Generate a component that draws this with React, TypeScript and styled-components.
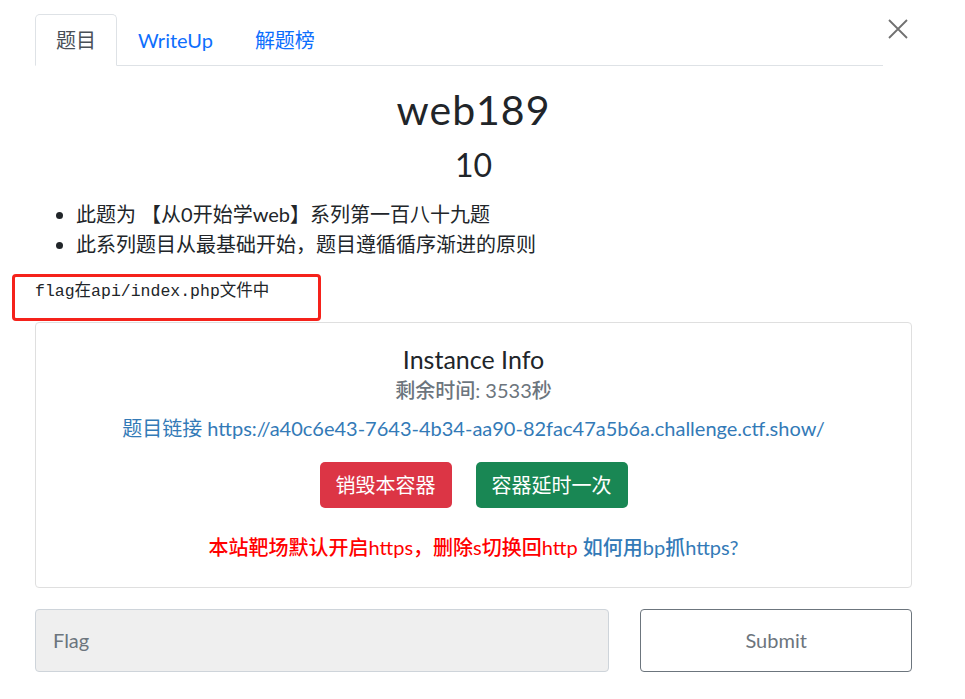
import React from "react";
import styled, { createGlobalStyle } from "styled-components";

const GlobalStyle = createGlobalStyle`
  body {
    margin: 0;
    background: #fff;
    color: #212529;
    font-family: Lato, "Noto Sans CJK SC", sans-serif;
  }
`;

const Page = styled.div`
  padding: 14px 53px 26px 35px;
`;

const Header = styled.div`
  display: flex;
  align-items: flex-start;
`;

const Tabs = styled.ul`
  flex: 1;
  display: flex;
  margin: 0;
  padding: 0;
  list-style: none;
  border-bottom: 1px solid #dee2e6;
`;

const Tab = styled.li<{ $active?: boolean }>`
  margin-bottom: -1px;
  padding: 10px 20px;
  font-size: 20px;
  line-height: 30px;
  border: 1px solid transparent;
  border-radius: 5px 5px 0 0;
  cursor: pointer;
  color: ${(p) => (p.$active ? "#495057" : "#0d6efd")};
  ${(p) =>
    p.$active &&
    `
    background: #fff;
    border-color: #dee2e6 #dee2e6 #fff;
  `}
`;

const CloseButton = styled.button`
  width: 20px;
  height: 20px;
  margin: 5px 4px 0 5px;
  padding: 0;
  border: none;
  background: none;
  cursor: pointer;
  display: flex;
`;

const Title = styled.h1`
  margin: 19px 0 0;
  font-size: 41px;
  font-weight: 400;
  line-height: 1.2;
  letter-spacing: 1px;
  text-align: center;
`;

const Score = styled.h2`
  margin: 12px 0 0;
  font-size: 32px;
  font-weight: 400;
  line-height: 1.2;
  text-align: center;
`;

const Points = styled.ul`
  margin: 14px 0 0;
  padding-left: 41px;
  font-size: 20px;
  line-height: 30px;
`;

const HintWrap = styled.div`
  position: relative;
  margin-top: 21px;
`;

const Hint = styled.pre`
  margin: 0;
  font-family: "Liberation Mono", "Noto Sans CJK SC", monospace;
  font-size: 16.5px;
  line-height: 24px;
  color: #212529;
`;

const Highlight = styled.div`
  position: absolute;
  left: -23px;
  top: -6px;
  width: 303px;
  height: 41px;
  border: 3px solid #f5221b;
  border-radius: 4px;
  pointer-events: none;
`;

const Card = styled.div`
  margin-top: 18px;
  padding: 22px 20px 26px;
  border: 1px solid #dfdfdf;
  border-radius: 4px;
  text-align: center;
`;

const CardTitle = styled.div`
  font-size: 25px;
  line-height: 29px;
`;

const Line = styled.div<{ $gap: number; $color?: string }>`
  margin-top: ${(p) => p.$gap}px;
  font-size: 20px;
  line-height: 28px;
  color: ${(p) => p.$color || "#212529"};
`;

const Strong = styled.span`
  font-weight: 500;
`;

const Link = styled.a`
  color: #337ab7;
  text-decoration: none;
`;

const Actions = styled.div`
  margin-top: 20px;
  display: flex;
  justify-content: center;
  gap: 24px;
`;

const ActionButton = styled.button<{ $tone: "danger" | "success" }>`
  padding: 8px 16px;
  border: none;
  border-radius: 5px;
  font-family: inherit;
  font-size: 20px;
  line-height: 30px;
  color: #fff;
  cursor: pointer;
  background: ${(p) => (p.$tone === "danger" ? "#dc3545" : "#198754")};
`;

const FlagForm = styled.form`
  margin-top: 21px;
  display: grid;
  grid-template-columns: calc((100% + 31px) * 2 / 3 - 31px) 1fr;
  column-gap: 31px;
`;

const FlagInput = styled.input`
  box-sizing: border-box;
  height: 63px;
  padding: 0 17px;
  border: 1px solid #ced4da;
  border-radius: 4px;
  background: #efefef;
  font-family: inherit;
  font-size: 20px;
  color: #495057;
  &::placeholder {
    color: #6c757d;
  }
`;

const SubmitButton = styled.button`
  height: 63px;
  border: 1px solid #6c757d;
  border-radius: 4px;
  background: #fff;
  font-family: inherit;
  font-size: 20px;
  color: #6c757d;
  cursor: pointer;
`;

export default function App() {
  return (
    <React.Fragment>
      <GlobalStyle />
      <Page>
        <Header>
          <Tabs>
            <Tab $active>题目</Tab>
            <Tab>WriteUp</Tab>
            <Tab>解题榜</Tab>
          </Tabs>
          <CloseButton aria-label="Close">
            <svg width="20" height="20" viewBox="0 0 20 20">
              <path d="M1 1L19 19M19 1L1 19" stroke="#707070" strokeWidth="1.8" />
            </svg>
          </CloseButton>
        </Header>

        <Title>web189</Title>
        <Score>10</Score>
        <Points>
          <li>此题为 【从0开始学web】系列第一百八十九题</li>
          <li>此系列题目从最基础开始，题目遵循循序渐进的原则</li>
        </Points>

        <HintWrap>
          <Hint>flag在api/index.php文件中</Hint>
          <Highlight />
        </HintWrap>

        <Card>
          <CardTitle>Instance Info</CardTitle>
          <Line $gap={2} $color="#6c757d">
            <Strong>剩余时间</Strong>: 3533<Strong>秒</Strong>
          </Line>
          <Line $gap={10}>
            <Link href="#">
              题目链接 https://a40c6e43-7643-4b34-aa90-82fac47a5b6a.challenge.ctf.show/
            </Link>
          </Line>
          <Actions>
            <ActionButton $tone="danger">销毁本容器</ActionButton>
            <ActionButton $tone="success">容器延时一次</ActionButton>
          </Actions>
          <Line $gap={25} $color="#ff0000">
            <Strong>本站靶场默认开启</Strong>https<Strong>，删除</Strong>s
            <Strong>切换回</Strong>http{" "}
            <Link href="#">
              <Strong>如何用</Strong>bp<Strong>抓</Strong>https?
            </Link>
          </Line>
        </Card>

        <FlagForm onSubmit={(e) => e.preventDefault()}>
          <FlagInput placeholder="Flag" />
          <SubmitButton type="submit">Submit</SubmitButton>
        </FlagForm>
      </Page>
    </React.Fragment>
  );
}
